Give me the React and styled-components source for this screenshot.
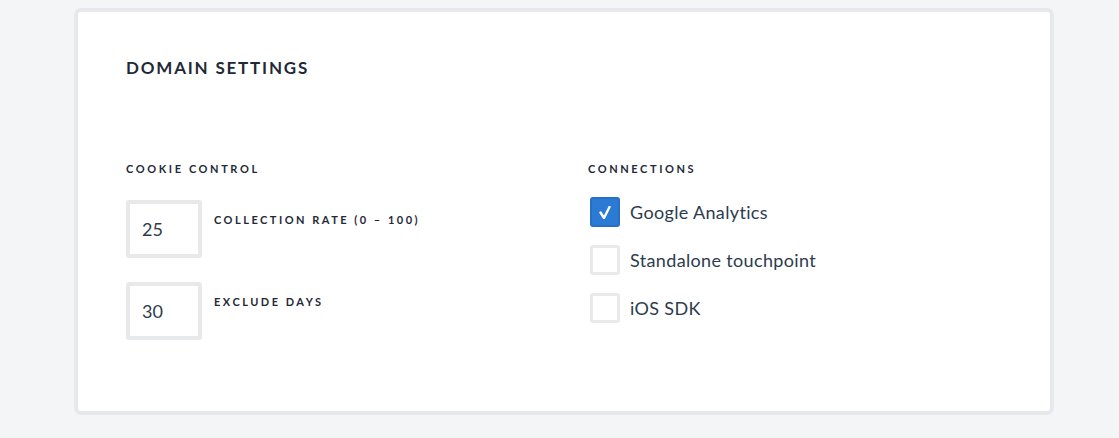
import styled, { createGlobalStyle } from "styled-components";

const GlobalStyle = createGlobalStyle`
  html, body {
    margin: 0;
    padding: 0;
    background: #f4f5f7;
    font-family: Lato, "Liberation Sans", sans-serif;
  }
`;

const Page = styled.div`
  padding: 8px 65px 0 74px;
  height: 430px;
`;

const Card = styled.section`
  box-sizing: border-box;
  width: 980px;
  height: 407px;
  background: #ffffff;
  border: 4px solid #e6e8eb;
  border-radius: 7px;
  padding: 45px 48px 0 48px;
`;

const Title = styled.h2`
  margin: 0;
  font-size: 17px;
  line-height: 22px;
  font-weight: 700;
  letter-spacing: 1.8px;
  color: #1f2937;
`;

const Columns = styled.div`
  display: grid;
  grid-template-columns: 462px 1fr;
  margin-top: 83px;
`;

const Column = styled.div`
  display: flex;
  flex-direction: column;
`;

const SectionLabel = styled.h3`
  margin: 0 0 ${(p) => p.$gap}px 0;
  font-size: 11px;
  line-height: 14px;
  font-weight: 700;
  letter-spacing: 2.6px;
  color: #1f2937;
`;

const FieldRow = styled.div`
  display: flex;
  align-items: flex-start;
  gap: 12px;
  margin-bottom: 24px;
`;

const NumberBox = styled.input`
  box-sizing: border-box;
  width: 76px;
  height: 58px;
  border: 4px solid #e8e9eb;
  border-radius: 3px;
  padding: 0 0 0 12px;
  font-family: Lato, "Liberation Sans", sans-serif;
  font-size: 18px;
  color: #2d3b4e;
  outline: none;
  background: #fff;
`;

const FieldLabel = styled.span`
  margin-top: 13px;
  font-size: 11px;
  line-height: 14px;
  font-weight: 700;
  letter-spacing: 2.5px;
  color: #1f2937;
`;

const CheckRow = styled.label`
  display: flex;
  align-items: center;
  gap: 10px;
  height: 30px;
  margin: 0 0 18px 2px;
  font-size: 18px;
  letter-spacing: 0.35px;
  color: #2d3b4e;
`;

const Box = styled.span`
  box-sizing: border-box;
  width: 30px;
  height: 30px;
  border-radius: 3px;
  display: flex;
  align-items: center;
  justify-content: center;
  background: ${(p) => (p.$checked ? "#2b7bd4" : "#ffffff")};
  border: ${(p) => (p.$checked ? "2px solid #2870c4" : "3px solid #e8e9eb")};
`;

const Check = () => (
  <svg width="12" height="13" viewBox="0 0 12 13">
    <path d="M1.5 6.5 L5 12 L10.5 1" fill="none" stroke="#fff" strokeWidth="2.4" strokeLinecap="round" strokeLinejoin="round" />
  </svg>
);

const connections = [
  { name: "Google Analytics", checked: true },
  { name: "Standalone touchpoint", checked: false },
  { name: "iOS SDK", checked: false },
];

export default function App() {
  return (
    <Page>
      <GlobalStyle />
      <Card>
        <Title>DOMAIN SETTINGS</Title>
        <Columns>
          <Column>
            <SectionLabel $gap={24}>COOKIE CONTROL</SectionLabel>
            <FieldRow>
              <NumberBox defaultValue="25" />
              <FieldLabel>COLLECTION RATE (0 – 100)</FieldLabel>
            </FieldRow>
            <FieldRow>
              <NumberBox defaultValue="30" />
              <FieldLabel>EXCLUDE DAYS</FieldLabel>
            </FieldRow>
          </Column>
          <Column>
            <SectionLabel $gap={21}>CONNECTIONS</SectionLabel>
            {connections.map((c) => (
              <CheckRow key={c.name}>
                <Box $checked={c.checked}>{c.checked && <Check />}</Box>
                {c.name}
              </CheckRow>
            ))}
          </Column>
        </Columns>
      </Card>
    </Page>
  );
}
